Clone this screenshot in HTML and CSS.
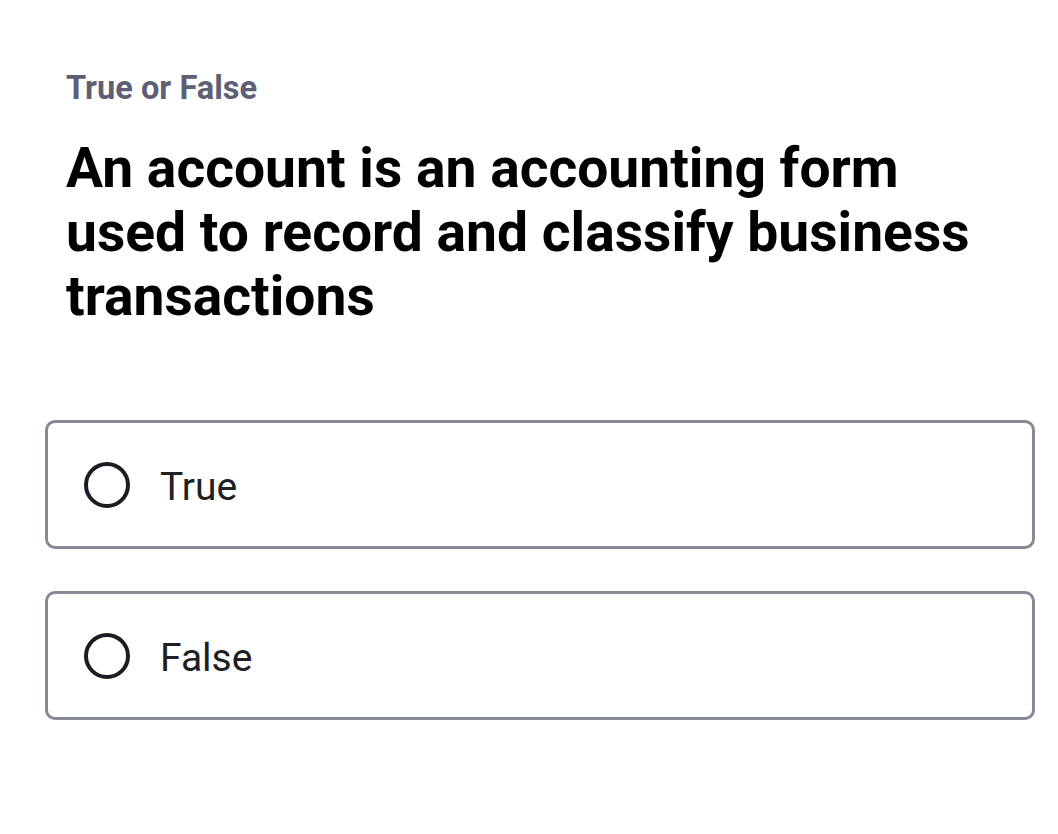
FILE: index.html
```html
<!DOCTYPE html>
<html>
<head>
<meta charset="utf-8">
<link rel="stylesheet" href="styles.css">
</head>
<body>
<main class="quiz">
  <div class="kind">True or False</div>
  <h1 class="question">An account is an accounting form used to record and classify business transactions</h1>
  <div class="options">
    <label class="option">
      <span class="radio"></span>
      <span class="option-text">True</span>
    </label>
    <label class="option">
      <span class="radio"></span>
      <span class="option-text">False</span>
    </label>
  </div>
</main>
</body>
</html>
```
FILE: styles.css
```css
html, body {
  margin: 0;
  padding: 0;
  background: #ffffff;
}
body {
  font-family: Roboto, "Noto Sans", sans-serif;
}
.quiz {
  padding: 66px 23px 0 45px;
}
.kind {
  padding-left: 21px;
  font-size: 32.6px;
  font-weight: 700;
  color: #5d6074;
  line-height: 44px;
}
.question {
  margin: 26px 0 0 0;
  padding-left: 21px;
  padding-right: 50px;
  font-size: 55.2px;
  font-weight: 700;
  line-height: 64px;
  color: #000000;
}
.options {
  margin-top: 92px;
  display: flex;
  flex-direction: column;
  gap: 42px;
}
.option {
  box-sizing: border-box;
  height: 129px;
  border: 3px solid #878a96;
  border-radius: 10px;
  display: flex;
  align-items: center;
  padding-left: 36px;
}
.radio {
  box-sizing: border-box;
  width: 46px;
  height: 46px;
  border: 4px solid #1c1d22;
  border-radius: 50%;
  flex: none;
}
.option-text {
  margin-left: 30px;
  padding-top: 4px;
  font-size: 39px;
  color: #1f2024;
}
```
